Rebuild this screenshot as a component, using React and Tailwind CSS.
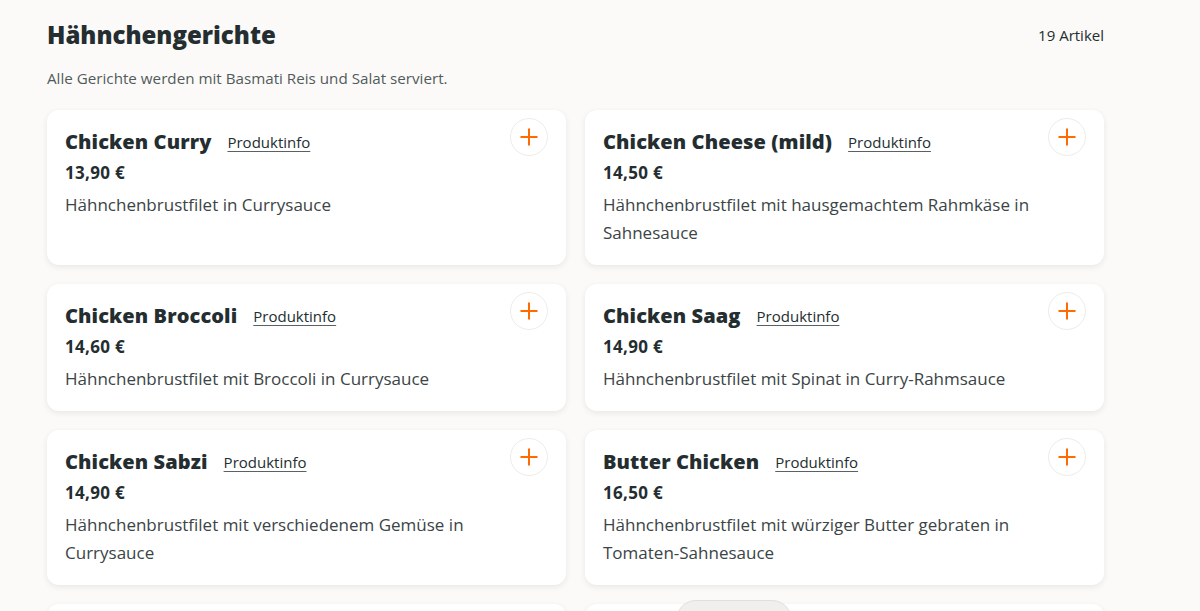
import React from "react";

const items = [
  { name: "Chicken Curry", price: "13,90 €", desc: "Hähnchenbrustfilet in Currysauce" },
  { name: "Chicken Cheese (mild)", price: "14,50 €", desc: "Hähnchenbrustfilet mit hausgemachtem Rahmkäse in Sahnesauce" },
  { name: "Chicken Broccoli", price: "14,60 €", desc: "Hähnchenbrustfilet mit Broccoli in Currysauce" },
  { name: "Chicken Saag", price: "14,90 €", desc: "Hähnchenbrustfilet mit Spinat in Curry-Rahmsauce" },
  { name: "Chicken Sabzi", price: "14,90 €", desc: "Hähnchenbrustfilet mit verschiedenem Gemüse in Currysauce" },
  { name: "Butter Chicken", price: "16,50 €", desc: "Hähnchenbrustfilet mit würziger Butter gebraten in Tomaten-Sahnesauce" },
  { name: "Chicken Tikka Masala", price: "16,50 €", desc: "Hähnchenbrustfilet im Tandoori-Ofen gegrillt in Masalasauce" },
  { name: "Chicken Madras", price: "14,90 €", desc: "Hähnchenbrustfilet in scharfer Currysauce" },
];

function Card({ item }) {
  return (
    <div className="relative bg-white rounded-xl shadow-[0_2px_6px_rgba(0,0,0,0.08)] px-[18px] pt-[18px] pb-[18px]">
      <div className="flex items-center h-7 gap-4">
        <span className="text-[20px] font-extrabold text-[#242e30] tracking-[0.1px]">{item.name}</span>
        <span className="text-[15px] text-[#242e30] underline underline-offset-[3px] decoration-[#5a6163]">Produktinfo</span>
      </div>
      <div className="mt-[3px] h-7 flex items-center text-[17px] font-bold text-[#242e30] tracking-[0.3px]">{item.price}</div>
      <div className="mt-[4px] text-[17px] leading-7 text-[#3b4446] pr-12">{item.desc}</div>
      <button className="absolute top-2 right-[18px] w-[38px] h-[38px] rounded-full border border-[#efece8] bg-white flex items-center justify-center">
        <svg width="20" height="20" viewBox="0 0 20 20">
          <path d="M10 1.5V18.5M1.5 10H18.5" stroke="#ff6b00" strokeWidth="2" />
        </svg>
      </button>
    </div>
  );
}

export default function App() {
  return (
    <div className="min-h-[611px] bg-[#fbfaf8] relative overflow-hidden" style={{ fontFamily: '"Open Sans", "Liberation Sans", sans-serif' }}>
      <div className="ml-[47px] w-[1057px] pt-[19px]">
        <div className="flex items-center justify-between h-8">
          <h1 className="text-[24px] font-extrabold text-[#242e30]">Hähnchengerichte</h1>
          <span className="text-[15px] text-[#242e30]">19 Artikel</span>
        </div>
        <p className="mt-[17px] text-[15.2px] leading-5 text-[#535a5c]">Alle Gerichte werden mit Basmati Reis und Salat serviert.</p>
        <div className="mt-[22px] grid grid-cols-2 gap-[19px]">
          {items.map((it) => (
            <Card key={it.name} item={it} />
          ))}
        </div>
      </div>
      <div className="absolute left-[676px] top-[600px] w-[116px] h-10 rounded-full bg-[#f0efed] border border-[#e2e0dd]"></div>
    </div>
  );
}
